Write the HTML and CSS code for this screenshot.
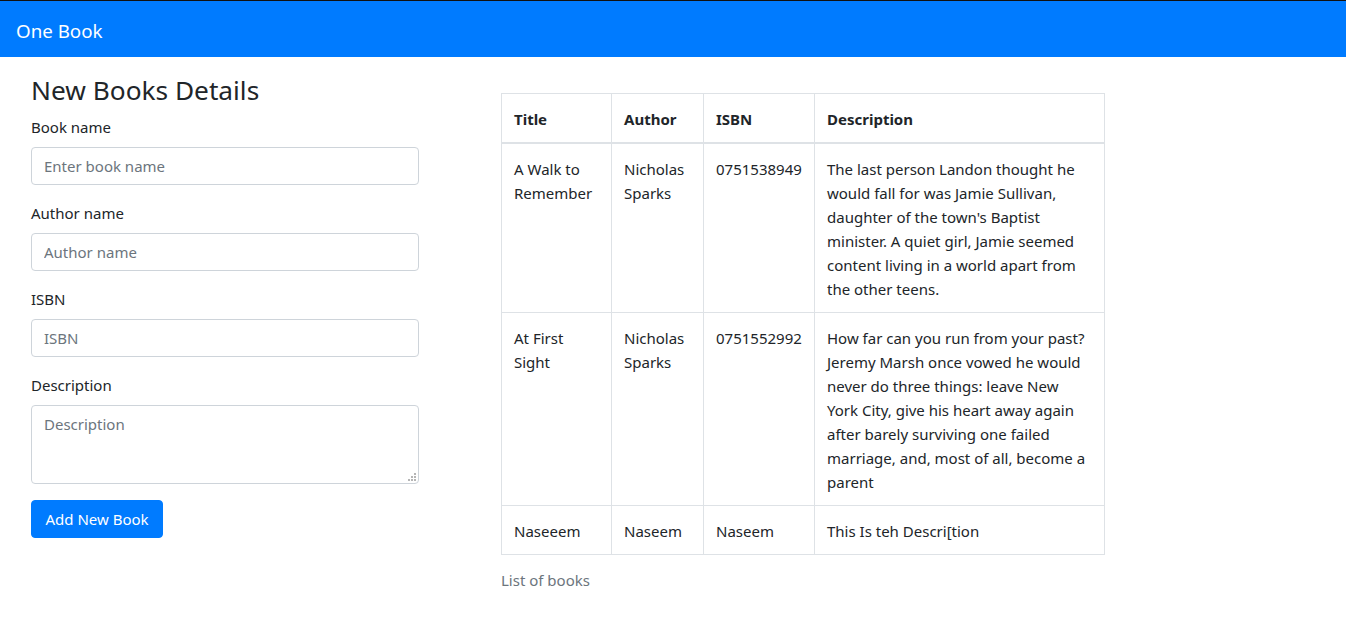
FILE: index.html
```html
<!DOCTYPE html>
<html lang="en">
<head>
<meta charset="utf-8">
<title>One Book</title>
<link rel="stylesheet" href="styles.css">
</head>
<body>
<nav class="navbar">
  <span class="brand">One Book</span>
</nav>
<main class="page">
  <section class="form-col">
    <h3 class="title">New Books Details</h3>
    <div class="form-group">
      <label class="label">Book name</label>
      <input class="control" type="text" placeholder="Enter book name">
    </div>
    <div class="form-group">
      <label class="label">Author name</label>
      <input class="control" type="text" placeholder="Author name">
    </div>
    <div class="form-group">
      <label class="label">ISBN</label>
      <input class="control" type="text" placeholder="ISBN">
    </div>
    <div class="form-group">
      <label class="label">Description</label>
      <div class="area-wrap">
        <textarea class="control area" placeholder="Description"></textarea>
        <svg class="grip" width="8" height="8" viewBox="0 0 8 8" aria-hidden="true">
          <rect x="6" y="0" width="2" height="2" fill="#b5b5b5"/>
          <rect x="3" y="3" width="2" height="2" fill="#b5b5b5"/>
          <rect x="6" y="3" width="2" height="2" fill="#b5b5b5"/>
          <rect x="0" y="6" width="2" height="2" fill="#b5b5b5"/>
          <rect x="3" y="6" width="2" height="2" fill="#b5b5b5"/>
          <rect x="6" y="6" width="2" height="2" fill="#b5b5b5"/>
        </svg>
      </div>
    </div>
    <button class="btn" type="button">Add New Book</button>
  </section>
  <section class="table-col">
    <table class="books">
      <caption class="caption">List of books</caption>
      <thead>
        <tr>
          <th class="c-title">Title</th>
          <th class="c-author">Author</th>
          <th class="c-isbn">ISBN</th>
          <th class="c-desc">Description</th>
        </tr>
      </thead>
      <tbody>
        <tr>
          <td>A Walk to Remember</td>
          <td>Nicholas Sparks</td>
          <td>0751538949</td>
          <td>The last person Landon thought he would fall for was Jamie Sullivan, daughter of the town's Baptist minister. A quiet girl, Jamie seemed content living in a world apart from the other teens.</td>
        </tr>
        <tr>
          <td>At First Sight</td>
          <td>Nicholas Sparks</td>
          <td>0751552992</td>
          <td>How far can you run from your past? Jeremy Marsh once vowed he would never do three things: leave New York City, give his heart away again after barely surviving one failed marriage, and, most of all, become a parent</td>
        </tr>
        <tr>
          <td>Naseeem</td>
          <td>Naseem</td>
          <td>Naseem</td>
          <td>This Is teh Descri[tion</td>
        </tr>
      </tbody>
    </table>
  </section>
</main>
</body>
</html>
```

FILE: styles.css
```css
* { box-sizing: border-box; }
html, body { margin: 0; padding: 0; }
body {
  font-family: "Noto Sans", "Open Sans", sans-serif;
  font-size: 15px;
  line-height: 24px;
  color: #212529;
  background: #fff;
}
.navbar {
  border-top: 1px solid #111;
  background: #007bff;
  height: 57px;
  padding: 4px 16px 0;
  display: flex;
  align-items: center;
}
.brand {
  color: #fff;
  font-size: 18.75px;
  line-height: 30px;
}
.page {
  display: flex;
  align-items: flex-start;
  padding: 16px 0 0 31px;
}
.form-col {
  width: 388px;
  flex: none;
}
.title {
  margin: 0 0 8px;
  font-size: 26.25px;
  line-height: 34px;
  font-weight: 400;
}
.form-group { margin-bottom: 16px; }
.label {
  display: block;
  margin-bottom: 8px;
}
.control {
  display: block;
  width: 100%;
  height: 38px;
  padding: 6px 12px;
  font: inherit;
  color: #495057;
  border: 1px solid #ced4da;
  border-radius: 4px;
  background: #fff;
}
.control::placeholder { color: #6c757d; opacity: 1; }
.area-wrap { position: relative; }
.area { height: 79px; resize: none; }
.grip {
  position: absolute;
  right: 3px;
  bottom: 3px;
}
.btn {
  font: inherit;
  color: #fff;
  background: #007bff;
  border: 1px solid #007bff;
  border-radius: 4px;
  height: 38px;
  padding: 6px 13.5px;
}
.table-col {
  margin-left: 82px;
  padding-top: 20px;
}
.books {
  border-collapse: collapse;
  table-layout: fixed;
  width: 603px;
  caption-side: bottom;
}
.caption {
  text-align: left;
  color: #6c757d;
  padding-top: 13px;
}
.books th, .books td {
  border: 1px solid #dee2e6;
  padding: 13px 12px 11px;
  vertical-align: top;
  text-align: left;
}
.books th { font-weight: 700; border-bottom-width: 2px; }
.c-title { width: 110px; }
.c-author { width: 92px; }
.c-isbn { width: 111px; }
.c-desc { width: 290px; }
```
